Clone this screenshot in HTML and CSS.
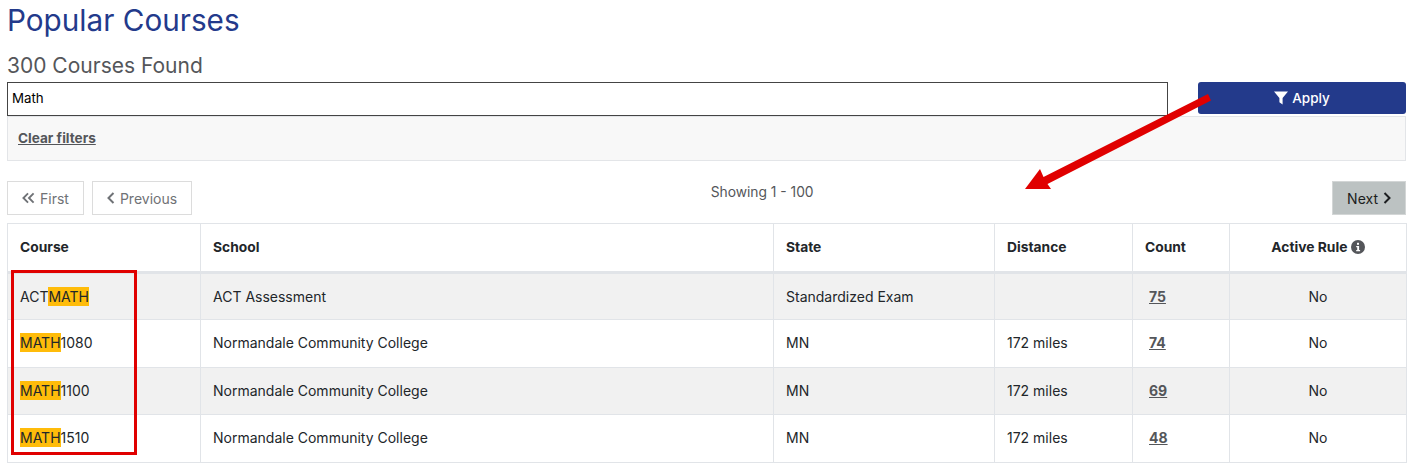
FILE: index.html
```html
<!DOCTYPE html>
<html lang="en">
<head>
<meta charset="utf-8">
<title>Popular Courses</title>
<link rel="stylesheet" href="styles.css">
</head>
<body>
<main class="page">
  <h1 class="title">Popular Courses</h1>
  <h2 class="found">300 Courses Found</h2>
  <div class="filter-row">
    <input class="search" type="text" value="Math">
    <button class="apply" type="button">
      <svg class="funnel" viewBox="0 0 14 14"><path d="M0 .5h14L8.600 7V13.500L5.400 11.300V7z"/></svg>
      Apply
    </button>
  </div>
  <div class="clear-panel"><a class="clear" href="#">Clear filters</a></div>
  <nav class="pager">
    <div class="pager-left">
      <a class="page-btn" href="#"><svg class="chev" viewBox="0 0 14 12"><path d="M6.500 1 1.500 6l5 5M12.500 1l-5 5 5 5"/></svg>First</a>
      <a class="page-btn" href="#"><svg class="chev single" viewBox="0 0 8 12"><path d="M6.500 1 1.500 6l5 5"/></svg>Previous</a>
    </div>
    <div class="showing">Showing 1 - 100</div>
    <a class="page-btn next" href="#">Next<svg class="chev single" viewBox="0 0 8 12"><path d="M1.500 1l5 5-5 5"/></svg></a>
  </nav>
  <table class="courses">
    <colgroup>
      <col class="c1"><col class="c2"><col class="c3"><col class="c4"><col class="c5"><col class="c6">
    </colgroup>
    <thead>
      <tr>
        <th>Course</th><th>School</th><th>State</th><th>Distance</th><th>Count</th>
        <th class="center">Active Rule <svg class="info" viewBox="0 0 14 14"><circle cx="7" cy="7" r="7"/><rect class="info-mark" x="6" y="2.800" width="2" height="2"/><path class="info-mark" d="M5.200 6h2.900v4h1v1.300H5.200V10h1V7.300h-1z"/></svg></th>
      </tr>
    </thead>
    <tbody>
      <tr>
        <td>ACT<mark>MATH</mark></td><td>ACT Assessment</td><td>Standardized Exam</td><td></td>
        <td><a class="count" href="#">75</a></td><td class="center">No</td>
      </tr>
      <tr>
        <td><mark>MATH</mark>1080</td><td>Normandale Community College</td><td>MN</td><td>172 miles</td>
        <td><a class="count" href="#">74</a></td><td class="center">No</td>
      </tr>
      <tr>
        <td><mark>MATH</mark>1100</td><td>Normandale Community College</td><td>MN</td><td>172 miles</td>
        <td><a class="count" href="#">69</a></td><td class="center">No</td>
      </tr>
      <tr>
        <td><mark>MATH</mark>1510</td><td>Normandale Community College</td><td>MN</td><td>172 miles</td>
        <td><a class="count" href="#">48</a></td><td class="center">No</td>
      </tr>
    </tbody>
  </table>
</main>
<div class="callout-box"></div>
<svg class="callout-arrow" viewBox="0 0 1415 464"><path d="M1208 94 1043.500 177 1040 169 1025 189 1051 189 1047.500 184 1211 100.500z"/></svg>
</body>
</html>
```
FILE: styles.css
```css
* { box-sizing: border-box; }
html, body { margin: 0; padding: 0; background: #fff; }
body {
  font-family: "Inter", "Liberation Sans", sans-serif;
  font-size: 14px;
  color: #22262a;
  height: 464px;
  overflow: hidden;
  position: relative;
}
.page { padding: 0 9px 0 7px; }
.title {
  margin: 0;
  padding-top: 2px;
  height: 49px;
  font-size: 29.700px;
  line-height: 36px;
  font-weight: 400;
  color: #233a8b;
}
.found {
  margin: 0;
  height: 33px;
  padding-top: 2px;
  font-size: 21px;
  line-height: 29px;
  font-weight: 400;
  color: #54565a;
}
.filter-row { display: flex; justify-content: space-between; height: 34px; }
.search {
  width: 1161px;
  height: 34px;
  border: 1px solid #444;
  padding: 0 4px 2px;
  font: inherit;
  font-size: 13.300px;
  color: #000;
  background: #fff;
  outline: none;
}
.apply {
  width: 208px;
  height: 32px;
  border: 0;
  border-radius: 3px;
  background: #233a8b;
  color: #fff;
  font: inherit;
  font-size: 13.500px;
  font-weight: 500;
  padding-bottom: 2px;
  display: flex;
  align-items: center;
  justify-content: center;
  gap: 4px;
}
.funnel { width: 14px; height: 14px; fill: #fff; }
.clear-panel {
  height: 45px;
  background: #f8f8f8;
  border: 1px solid #e3e5e8;
  padding: 0 10px 1px;
  display: flex;
  align-items: center;
}
.clear { color: #54565a; font-weight: 700; font-size: 13.600px; text-decoration: underline; }
.pager {
  display: flex;
  justify-content: space-between;
  margin-top: 20px;
  height: 42px;
  position: relative;
}
.pager-left { display: flex; gap: 8px; }
.page-btn {
  height: 34px;
  display: flex;
  align-items: center;
  gap: 5px;
  padding: 0 14px;
  border: 1px solid #dcdcdc;
  color: #6f7276;
  font-size: 14px;
  text-decoration: none;
  background: #fff;
}
.chev { width: 13px; height: 12px; fill: none; stroke: currentColor; stroke-width: 2; }
.chev.single { width: 8px; }
.next { background: #bcc2c2; color: #1c1e20; border-color: #d3d6d6; gap: 5px; }
.showing { color: #54565a; padding-top: 3px; font-size: 13.800px; line-height: 17px; }
.courses {
  width: 1399px;
  table-layout: fixed;
  border-collapse: collapse;
  border: 1px solid #e1e4e8;
}
.c1 { width: 193px; }
.c2 { width: 573px; }
.c3 { width: 221px; }
.c4 { width: 138px; }
.c5 { width: 97px; }
.c6 { width: 177px; }
th, td {
  text-align: left;
  padding: 0 12px 1px;
  border: 1px solid #e1e4e8;
  font-size: 14px;
}
th { height: 49px; font-size: 13.800px; font-weight: 700; border-bottom-width: 3px; color: #22262a; }
td { height: 47.500px; }
tbody tr:first-child td { height: 47px; }
tbody tr:nth-child(odd) { background: #f1f1f1; }
.center { text-align: center; }
mark { background: #ffbc0a; color: inherit; padding: 1px 0; }
.count { color: #54565a; font-weight: 700; text-decoration: underline; margin-left: 4px; }
.info { width: 14px; height: 14px; fill: #54565a; vertical-align: -2px; }
.info-mark { fill: #fff; }
.callout-box {
  position: absolute;
  left: 11px;
  top: 270px;
  width: 126px;
  height: 185px;
  border: 3px solid #e00000;
}
.callout-arrow {
  position: absolute;
  left: 0;
  top: 0;
  width: 1415px;
  height: 464px;
  fill: #e00000;
  pointer-events: none;
}
```
